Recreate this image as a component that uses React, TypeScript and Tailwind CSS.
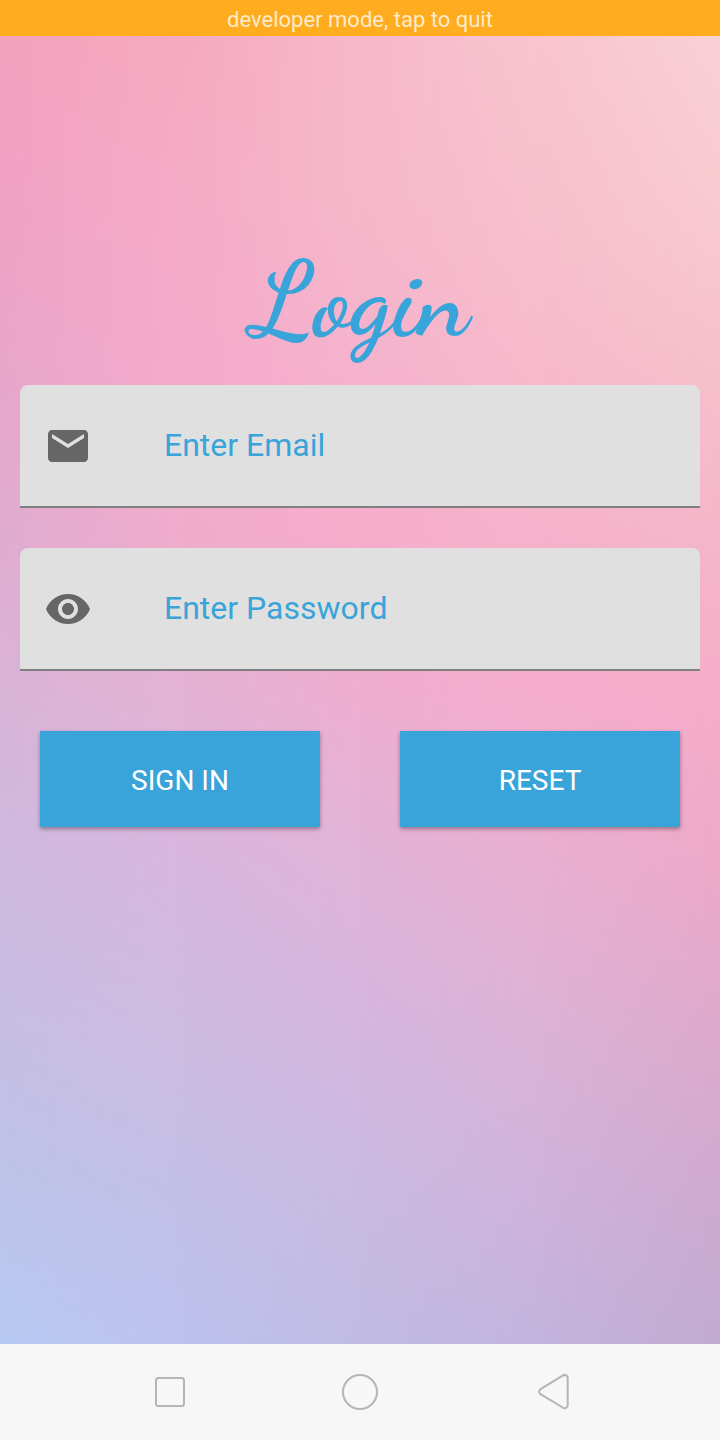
import { useState } from 'react';
import type { ReactNode } from 'react';
import { MdEmail, MdVisibility } from 'react-icons/md';

type FieldProps = {
  id: string;
  type: string;
  label: string;
  icon: ReactNode;
  value: string;
  onChange: (value: string) => void;
};

function Field({ id, type, label, icon, value, onChange }: FieldProps) {
  return (
    <div className="flex items-center rounded-t-lg border-b-2 border-[#808080] bg-[#e0e0e0] pl-6">
      <label htmlFor={id} aria-label={label} className="shrink-0 text-[#666666]">
        {icon}
      </label>
      <input
        id={id}
        type={type}
        placeholder={label}
        value={value}
        onChange={(event) => onChange(event.target.value)}
        className="ml-[72px] h-[121px] min-w-0 flex-1 bg-transparent pr-6 pb-0.5 text-[32px] text-[#39a4d9] outline-none placeholder:text-[#39a4d9] placeholder:opacity-100"
      />
    </div>
  );
}

const buttonClass =
  'h-24 bg-[#39a4d9] pt-1 text-[28px] text-white shadow-[0_2px_4px_rgba(0,0,0,0.35)]';

// Five vertical colour ramps, each faded in from its left neighbour.
function PastelBackdrop() {
  return (
    <div aria-hidden="true" className="col-start-1 row-start-1 grid">
      <div className="col-start-1 row-start-1 bg-[linear-gradient(#f3a2be_0%,#f2a2c3_10%,#e7a7ca_27%,#e0acd1_38%,#d9b4d8_50%,#cfb9df_63%,#c8bee3_75%,#bec3e8_87%,#b7caf3_100%)]" />
      <div className="col-start-1 row-start-1 bg-[linear-gradient(#f5aabe_0%,#f4abc6_12%,#f4aacb_27%,#f0abcb_38%,#e3b3d5_50%,#d8b6df_63%,#cdbce1_77%,#c3bfe6_88%,#bdc2ee_100%)] [mask-image:linear-gradient(to_right,transparent_0%,black_25%)]" />
      <div className="col-start-1 row-start-1 bg-[linear-gradient(#f7b8ca_0%,#f6b8c9_12%,#f5b3cd_24%,#f5adca_38%,#efadcf_50%,#e0b4d9_63%,#d6b5df_75%,#cabae0_87%,#c0bbe2_100%)] [mask-image:linear-gradient(to_right,transparent_25%,black_50%)]" />
      <div className="col-start-1 row-start-1 bg-[linear-gradient(#f9c4cf_0%,#f8bfcd_14%,#f7b9cb_27%,#f6b2cb_38%,#f5adcd_50%,#e9afd0_63%,#dcb2d6_75%,#d0b2db_88%,#c2b4dd_100%)] [mask-image:linear-gradient(to_right,transparent_50%,black_75%)]" />
      <div className="col-start-1 row-start-1 bg-[linear-gradient(#f8d1d5_0%,#f8c9d0_14%,#f6bdca_28%,#f4b6c9_38%,#f5adc8_50%,#eba8c8_65%,#daaacd_78%,#cfa9d0_88%,#c2abd0_100%)] [mask-image:linear-gradient(to_right,transparent_75%,black_100%)]" />
    </div>
  );
}

export default function App() {
  const [email, setEmail] = useState('');
  const [password, setPassword] = useState('');

  return (
    <div className="flex min-h-screen flex-col font-['Roboto',sans-serif]">
      <button type="button" className="h-9 w-full bg-[#ffac1f] pt-1 text-[22px] leading-8 text-[#ffeaca]">
        developer mode, tap to quit
      </button>

      <main className="grid flex-1 grid-cols-1">
        <PastelBackdrop />
        <form
          className="z-10 col-start-1 row-start-1 flex flex-col px-5 pt-[205px]"
          onSubmit={(event) => event.preventDefault()}
          onReset={() => {
            setEmail('');
            setPassword('');
          }}
        >
          <h1 className="mb-6 text-center font-['Dancing_Script','Liberation_Serif',cursive] text-[104px] leading-[120px] font-bold text-[#39a4d9]">
            Login
          </h1>
          <div className="flex flex-col gap-10">
            <Field
              id="email"
              type="email"
              label="Enter Email"
              icon={<MdEmail className="size-12" />}
              value={email}
              onChange={setEmail}
            />
            <Field
              id="password"
              type="password"
              label="Enter Password"
              icon={<MdVisibility className="size-12" />}
              value={password}
              onChange={setPassword}
            />
          </div>
          <div className="mt-[60px] grid grid-cols-2 gap-20 px-5">
            <button type="submit" className={buttonClass}>
              SIGN IN
            </button>
            <button type="reset" className={buttonClass}>
              RESET
            </button>
          </div>
        </form>
      </main>

      <nav aria-label="System navigation" className="flex h-24 items-center justify-center gap-[142px] bg-[#f7f7f7] text-[#b5b5b5]">
        <button type="button" aria-label="Recent apps">
          <svg className="size-12" viewBox="0 0 48 48" fill="none" stroke="currentColor" strokeWidth="2">
            <rect x="10" y="10" width="28" height="28" rx="2.5" />
          </svg>
        </button>
        <button type="button" aria-label="Home">
          <svg className="size-12" viewBox="0 0 48 48" fill="none" stroke="currentColor" strokeWidth="2">
            <circle cx="24" cy="24" r="17" />
          </svg>
        </button>
        <button type="button" aria-label="Back">
          <svg className="size-12" viewBox="0 0 48 48" fill="none" stroke="currentColor" strokeWidth="2">
            <path d="M14.500 21.200 36.700 7.700A3 3 0 0 1 41.700 10.200V37A3 3 0 0 1 36.700 39.500L14.500 26.200A3 3 0 0 1 14.500 21.200Z" />
          </svg>
        </button>
      </nav>
    </div>
  );
}
